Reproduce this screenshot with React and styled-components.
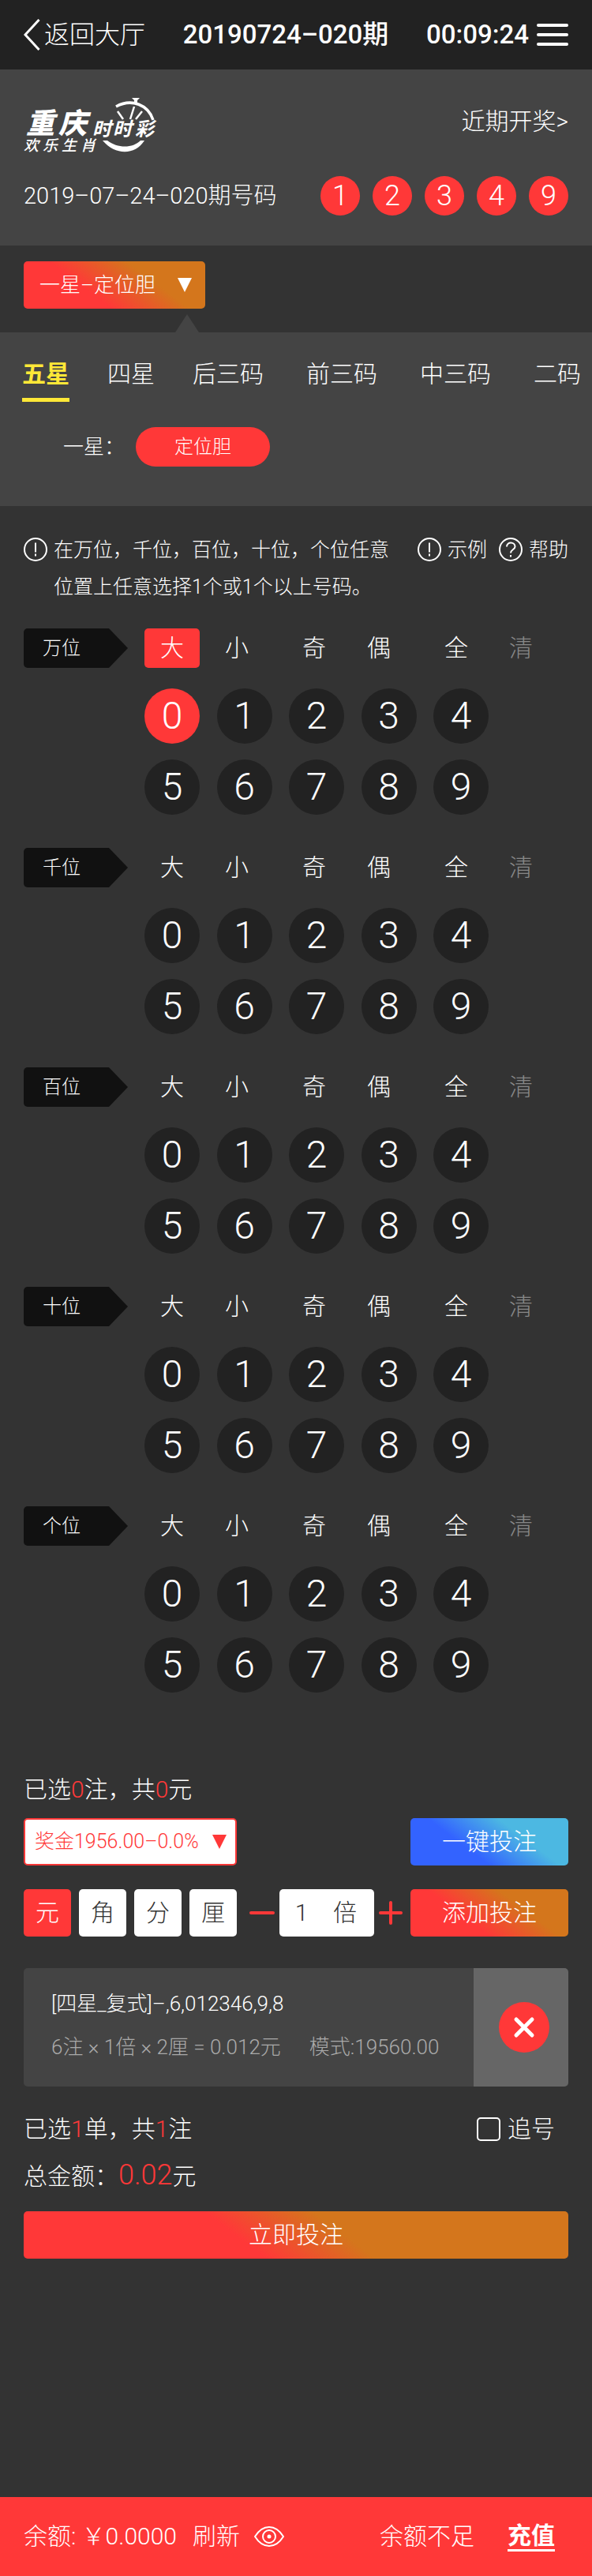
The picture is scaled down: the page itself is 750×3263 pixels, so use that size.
import React from "react";
import styled, { createGlobalStyle, css } from "styled-components";

const c = {
  bar: "#222222",
  page: "#333333",
  panel: "#444444",
  red: "#ff3838",
  orange: "#d4761c",
  yellow: "#ffe837",
};

const warm = css`
  background: linear-gradient(37deg, ${c.red} 36%, ${c.orange} 68%);
`;

const GlobalStyle = createGlobalStyle`
  * { box-sizing: border-box; }
  body {
    margin: 0;
    background: ${c.page};
    color: #fff;
    font-family: Roboto, "Noto Sans CJK SC", sans-serif;
    font-weight: 300;
    font-size: 30px;
    line-height: 40px;
  }
  button, input, select {
    margin: 0;
    padding: 0;
    border: 0;
    background: none;
    color: inherit;
    font: inherit;
  }
  button { cursor: pointer; white-space: nowrap; }
  a { color: inherit; text-decoration: none; }
`;

const Page = styled.div`
  min-height: 100vh;
  display: flex;
  flex-direction: column;
`;

const Header = styled.header`
  display: flex;
  align-items: center;
  justify-content: space-between;
  height: 88px;
  padding: 0 30px;
  background: ${c.bar};
  font-size: 32px;
`;

const Back = styled.a`
  display: flex;
  align-items: center;
  gap: 4px;
`;

const Title = styled.h1`
  margin: 0;
  font-size: 33px;
  font-weight: 500;
`;

const Clock = styled.div`
  display: flex;
  align-items: center;
  gap: 10px;
  font-size: 33px;
  font-weight: 500;
`;

const MenuButton = styled.button`
  display: flex;
  flex-direction: column;
  gap: 8px;
  width: 40px;
  i {
    height: 4px;
    border-radius: 2px;
    background: #fff;
  }
`;

const DrawPanel = styled.section`
  padding: 36px 30px 38px;
  background: ${c.panel};
`;

const Between = styled.div`
  display: flex;
  align-items: center;
  justify-content: space-between;
`;

const HistoryLink = styled.a`
  margin-bottom: 8px;
`;

const DrawLine = styled(Between)`
  margin-top: 31px;
  font-size: 29px;
`;

const Results = styled.div`
  display: flex;
  gap: 16px;
`;

const ResultBall = styled.span`
  width: 50px;
  height: 50px;
  border-radius: 50%;
  background: ${c.red};
  font-size: 36px;
  line-height: 50px;
  text-align: center;
`;

const PlayBar = styled.div`
  padding: 20px 30px 30px;
`;

const SelectWrap = styled.div`
  position: relative;
  width: ${(p) => p.$width}px;
  svg {
    position: absolute;
    right: ${(p) => p.$arrow}px;
    top: 21px;
    pointer-events: none;
  }
`;

const PlaySelect = styled.select`
  ${warm}
  appearance: none;
  width: 100%;
  height: 60px;
  padding-left: 20px;
  border-radius: 5px;
  font-size: 26px;
`;

const PrizeSelect = styled.select`
  appearance: none;
  width: 100%;
  height: 60px;
  padding-left: 12px;
  border: 2px solid ${c.red};
  border-radius: 5px;
  background: #fff;
  color: ${c.red};
  font-size: 25px;
`;

const TypePanel = styled.section`
  position: relative;
  padding: 32px 0 50px 28px;
  background: ${c.panel};
`;

const Pointer = styled.svg`
  position: absolute;
  left: 222px;
  top: -23px;
`;

const Tabs = styled.nav`
  display: flex;
  gap: 48px;
  overflow: hidden;
`;

const Tab = styled.button`
  flex: none;
  height: 56px;
  margin-right: ${(p) => (p.$long ? 6 : 0)}px;
  padding-bottom: 10px;
  border-bottom: 5px solid ${(p) => (p.$on ? c.yellow : "transparent")};
  color: ${(p) => (p.$on ? c.yellow : "#fff")};
  font-weight: ${(p) => (p.$on ? 700 : 300)};
`;

const SubRow = styled.div`
  display: flex;
  align-items: center;
  gap: 14px;
  margin-top: 32px;
  padding-left: 52px;
  font-size: 26px;
`;

const Pill = styled.button`
  width: 170px;
  height: 50px;
  border-radius: 25px;
  background: ${c.red};
  font-size: 24px;
`;

const Content = styled.main`
  flex: 1;
  padding: 32px 30px 200px;
`;

const Tips = styled.div`
  display: flex;
  justify-content: space-between;
  font-size: 25px;
  line-height: 47px;
`;

const Tip = styled.div`
  display: flex;
  gap: 8px;
  svg { flex: none; margin-top: 8px; }
  p { margin: 0; }
`;

const TipLinks = styled.div`
  display: flex;
  gap: 15px;
`;

const TipLink = styled.a`
  display: flex;
  gap: 8px;
  svg { margin-top: 8px; }
`;

const Positions = styled.div`
  display: flex;
  flex-direction: column;
  gap: 42px;
  margin-top: 29px;
`;

const Position = styled.section`
  display: grid;
  grid-template-columns: 132px 1fr;
  column-gap: 21px;
  row-gap: 26px;
`;

const PositionName = styled.h2`
  margin: 0;
  padding-left: 24px;
  border-radius: 5px;
  background: #111;
  clip-path: polygon(0 0, 108px 0, 100% 50%, 108px 100%, 0 100%);
  font-size: 24px;
  font-weight: 300;
  line-height: 50px;
`;

const Picks = styled.div`
  display: flex;
  gap: 28px;
`;

const PickPair = styled.div`
  display: flex;
  gap: 12px;
`;

const Pick = styled.button`
  width: 70px;
  height: 50px;
  border-radius: 5px;
  background: ${(p) => (p.$on ? c.red : "transparent")};
  color: ${(p) => (p.$dim ? "#888" : "#fff")};
`;

const Balls = styled.div`
  grid-column: 2;
  display: grid;
  grid-template-columns: repeat(5, 70px);
  justify-content: space-between;
  row-gap: 20px;
  width: 436px;
`;

const Ball = styled.button`
  height: 70px;
  border-radius: 50%;
  background: ${(p) => (p.$on ? c.red : c.bar)};
  font-size: 48px;
`;

const Summary = styled.p`
  margin: 0;
  em {
    color: ${c.red};
    font-style: normal;
  }
`;

const BigAmount = styled.em`
  font-size: 36px;
`;

const BetForm = styled.section`
  display: flex;
  flex-direction: column;
  margin-top: 103px;
`;

const PrizeRow = styled(Between)`
  margin-top: 16px;
`;

const UnitRow = styled.div`
  display: flex;
  align-items: center;
  margin-top: 30px;
`;

const Units = styled.div`
  display: flex;
  gap: 10px;
`;

const Unit = styled.button`
  width: 60px;
  height: 60px;
  border-radius: 5px;
  background: ${(p) => (p.$on ? c.red : "#fff")};
  color: ${(p) => (p.$on ? "#fff" : c.page)};
`;

const Stepper = styled.div`
  display: flex;
  align-items: center;
  gap: 6px;
  margin: 0 10px 0 auto;
  button { display: flex; }
`;

const Times = styled.label`
  display: flex;
  align-items: center;
  width: 120px;
  height: 60px;
  padding: 0 22px 0 12px;
  border-radius: 5px;
  background: #fff;
  color: ${c.page};
  input {
    width: 32px;
    margin-right: auto;
    text-align: center;
  }
`;

const ActionButton = styled.button`
  width: 200px;
  height: 60px;
  border-radius: 5px;
  ${warm}
  ${(p) => p.$cool && css`background: linear-gradient(37deg, #3363ff 36%, #4cb8e2 68%);`}
`;

const Ticket = styled.article`
  display: flex;
  height: 150px;
  margin-top: 40px;
  border-radius: 5px;
  overflow: hidden;
  background: ${c.panel};
  font-size: 26px;
`;

const TicketText = styled.div`
  flex: 1;
  padding: 25px 0 0 35px;
  white-space: pre;
  p { margin: 0; }
  p + p {
    display: flex;
    gap: 36px;
    margin-top: 15px;
    color: #aaa;
  }
`;

const RemoveButton = styled.button`
  display: flex;
  align-items: center;
  justify-content: center;
  width: 120px;
  padding-left: 8px;
  background: #666;
`;

const OrderRow = styled(Between)`
  margin-top: 34px;
  padding-right: 17px;
`;

const Chase = styled.label`
  display: flex;
  align-items: center;
  gap: 9px;
  input {
    appearance: none;
    width: 30px;
    height: 30px;
    border: 2px solid #fff;
    border-radius: 5px;
  }
`;

const Total = styled(Summary)`
  margin-top: 18px;
`;

const SubmitButton = styled.button`
  height: 60px;
  margin-top: 24px;
  border-radius: 5px;
  background: linear-gradient(37deg, ${c.red} 40%, ${c.orange} 58%);
`;

const Footer = styled.footer`
  display: flex;
  align-items: center;
  justify-content: space-between;
  height: 100px;
  padding: 0 47px 0 30px;
  background: ${c.red};
`;

const Balance = styled.div`
  display: flex;
  align-items: center;
`;

const Refresh = styled.button`
  margin: 0 18px 0 20px;
`;

const EyeButton = styled.button`
  display: flex;
`;

const Recharge = styled.div`
  display: flex;
  align-items: center;
  gap: 42px;
  a {
    border-bottom: 3px solid #fff;
    font-weight: 700;
    line-height: 34px;
  }
`;

const LogoMark = styled.svg`
  overflow: visible;
`;

const Logo = () => (
  <LogoMark width="174" height="68" viewBox="0 0 174 68" role="img" aria-label="重庆时时彩 欢乐生肖">
    <g fill="#fff" fontStyle="italic" fontFamily='"Noto Sans CJK SC", sans-serif'>
      <text x="3 44" y="45" fontSize="36" fontWeight="900">重庆</text>
      <text x="87 113 141" y="48" fontSize="24" fontWeight="700">时时彩</text>
      <text x="0 24 48 72" y="67" fontSize="19" fontWeight="500">欢乐生肖</text>
    </g>
    <path d="M117 11 C137 0 158 9 164 28" fill="none" stroke="#fff" strokeWidth="3.5" />
    <path d="M137 0 H147 L144 3 V6 H140 V3 Z" fill="#fff" />
    <path d="M119 17 L126 27 M140 11 L135 27 M150 17 L142 27" fill="none" stroke="#fff" strokeWidth="2.5" />
    <path d="M100 54 C116 73 141 73 153 54 H148 C138 64 119 64 106 54 Z" fill="#fff" />
  </LogoMark>
);

const Arrow = ({ color }) => (
  <svg width="18" height="18" viewBox="0 0 18 18" aria-hidden="true">
    <path d="M0 0 H18 L9 18 Z" fill={color} />
  </svg>
);

const NoteIcon = () => (
  <svg width="30" height="30" viewBox="0 0 30 30" fill="none" stroke="#fff" strokeWidth="2" aria-hidden="true">
    <circle cx="15" cy="15" r="14" />
    <path d="M15 6.500 V18.500 M15 20.500 V23.500" />
  </svg>
);

const HelpIcon = () => (
  <svg width="30" height="30" viewBox="0 0 30 30" fill="none" stroke="#fff" strokeWidth="2" aria-hidden="true">
    <circle cx="15" cy="15" r="14" />
    <path d="M10 11.500 C10 4.800 20.500 5 20.500 11.500 C20.500 15 15 15 15 19.500 M15 22 V24.500" />
  </svg>
);

const tabs = ["五星", "四星", "后三码", "前三码", "中三码", "二码"];
const positions = ["万位", "千位", "百位", "十位", "个位"];
const pickPairs = [["大", "小"], ["奇", "偶"], ["全", "清"]];
const units = ["元", "角", "分", "厘"];

export default function App() {
  return (
    <Page>
      <GlobalStyle />
      <Header>
        <Back href="#lobby">
          <svg width="22" height="40" viewBox="0 0 22 40" fill="none" stroke="#fff" strokeWidth="3" aria-hidden="true">
            <path d="M19.500 1 L2 20 L19.500 39" />
          </svg>
          返回大厅
        </Back>
        <Title>20190724–020期</Title>
        <Clock>
          <time>00:09:24</time>
          <MenuButton aria-label="菜单"><i /><i /><i /></MenuButton>
        </Clock>
      </Header>

      <DrawPanel>
        <Between>
          <Logo />
          <HistoryLink href="#history">近期开奖&gt;</HistoryLink>
        </Between>
        <DrawLine>
          <span>2019–07–24–020期号码</span>
          <Results>
            {[1, 2, 3, 4, 9].map((n) => <ResultBall key={n}>{n}</ResultBall>)}
          </Results>
        </DrawLine>
      </DrawPanel>

      <PlayBar>
        <SelectWrap $width={230} $arrow={17}>
          <PlaySelect aria-label="玩法"><option>一星–定位胆</option></PlaySelect>
          <Arrow color="#fff" />
        </SelectWrap>
      </PlayBar>

      <TypePanel>
        <Pointer width="30" height="23" viewBox="0 0 30 23" aria-hidden="true">
          <path d="M15 0 L30 23 H0 Z" fill={c.panel} />
        </Pointer>
        <Tabs>
          {tabs.map((t, i) => (
            <Tab key={t} $on={i === 0} $long={t.length > 2}>{t}</Tab>
          ))}
        </Tabs>
        <SubRow>
          <span>一星：</span>
          <Pill>定位胆</Pill>
        </SubRow>
      </TypePanel>

      <Content>
        <Tips>
          <Tip>
            <NoteIcon />
            <p>在万位，千位，百位，十位，个位任意<br />位置上任意选择1个或1个以上号码。</p>
          </Tip>
          <TipLinks>
            <TipLink href="#example"><NoteIcon />示例</TipLink>
            <TipLink href="#help"><HelpIcon />帮助</TipLink>
          </TipLinks>
        </Tips>

        <Positions>
          {positions.map((name, row) => (
            <Position key={name}>
              <PositionName>{name}</PositionName>
              <Picks>
                {pickPairs.map((pair) => (
                  <PickPair key={pair[0]}>
                    {pair.map((p) => (
                      <Pick key={p} $on={row === 0 && p === "大"} $dim={p === "清"}>{p}</Pick>
                    ))}
                  </PickPair>
                ))}
              </Picks>
              <Balls>
                {Array.from({ length: 10 }, (_, n) => (
                  <Ball key={n} $on={row === 0 && n === 0}>{n}</Ball>
                ))}
              </Balls>
            </Position>
          ))}
        </Positions>

        <BetForm>
          <Summary>已选<em>0</em>注，共<em>0</em>元</Summary>
          <PrizeRow>
            <SelectWrap $width={270} $arrow={13}>
              <PrizeSelect aria-label="奖金"><option>奖金1956.00–0.0%</option></PrizeSelect>
              <Arrow color={c.red} />
            </SelectWrap>
            <ActionButton $cool>一键投注</ActionButton>
          </PrizeRow>
          <UnitRow>
            <Units>
              {units.map((u, i) => <Unit key={u} $on={i === 0}>{u}</Unit>)}
            </Units>
            <Stepper>
              <button aria-label="减少">
                <svg width="32" height="32" viewBox="0 0 32 32" stroke={c.red} strokeWidth="4" strokeLinecap="round">
                  <path d="M2 16 H30" />
                </svg>
              </button>
              <Times>
                <input type="text" inputMode="numeric" defaultValue="1" aria-label="倍数" />
                倍
              </Times>
              <button aria-label="增加">
                <svg width="30" height="32" viewBox="0 0 30 32" stroke={c.red} strokeWidth="4" strokeLinecap="round">
                  <path d="M2 16 H28 M15 3 V29" />
                </svg>
              </button>
            </Stepper>
            <ActionButton>添加投注</ActionButton>
          </UnitRow>

          <Ticket>
            <TicketText>
              <p>[四星_复式]–,6,012346,9,8</p>
              <p><span>6注 × 1倍 × 2厘 = 0.012元</span><span>模式:19560.00</span></p>
            </TicketText>
            <RemoveButton aria-label="删除">
              <svg width="64" height="64" viewBox="0 0 64 64">
                <circle cx="32" cy="32" r="32" fill={c.red} />
                <path d="M22 22 L42 42 M42 22 L22 42" stroke="#fff" strokeWidth="5" strokeLinecap="round" />
              </svg>
            </RemoveButton>
          </Ticket>

          <OrderRow>
            <Summary>已选<em>1</em>单，共<em>1</em>注</Summary>
            <Chase><input type="checkbox" />追号</Chase>
          </OrderRow>
          <Total>总金额：<BigAmount>0.02</BigAmount>元</Total>
          <SubmitButton>立即投注</SubmitButton>
        </BetForm>
      </Content>

      <Footer>
        <Balance>
          <span>余额: ￥0.0000</span>
          <Refresh>刷新</Refresh>
          <EyeButton aria-label="显示余额">
            <svg width="38" height="26" viewBox="0 0 38 26" fill="none" stroke="#fff" strokeWidth="2">
              <path d="M1 13 C11 -3 27 -3 37 13 C27 29 11 29 1 13 Z" />
              <circle cx="19" cy="13" r="8" />
              <circle cx="19" cy="13" r="2.500" fill="#fff" stroke="none" />
            </svg>
          </EyeButton>
        </Balance>
        <Recharge>
          <span>余额不足</span>
          <a href="#recharge">充值</a>
        </Recharge>
      </Footer>
    </Page>
  );
}
